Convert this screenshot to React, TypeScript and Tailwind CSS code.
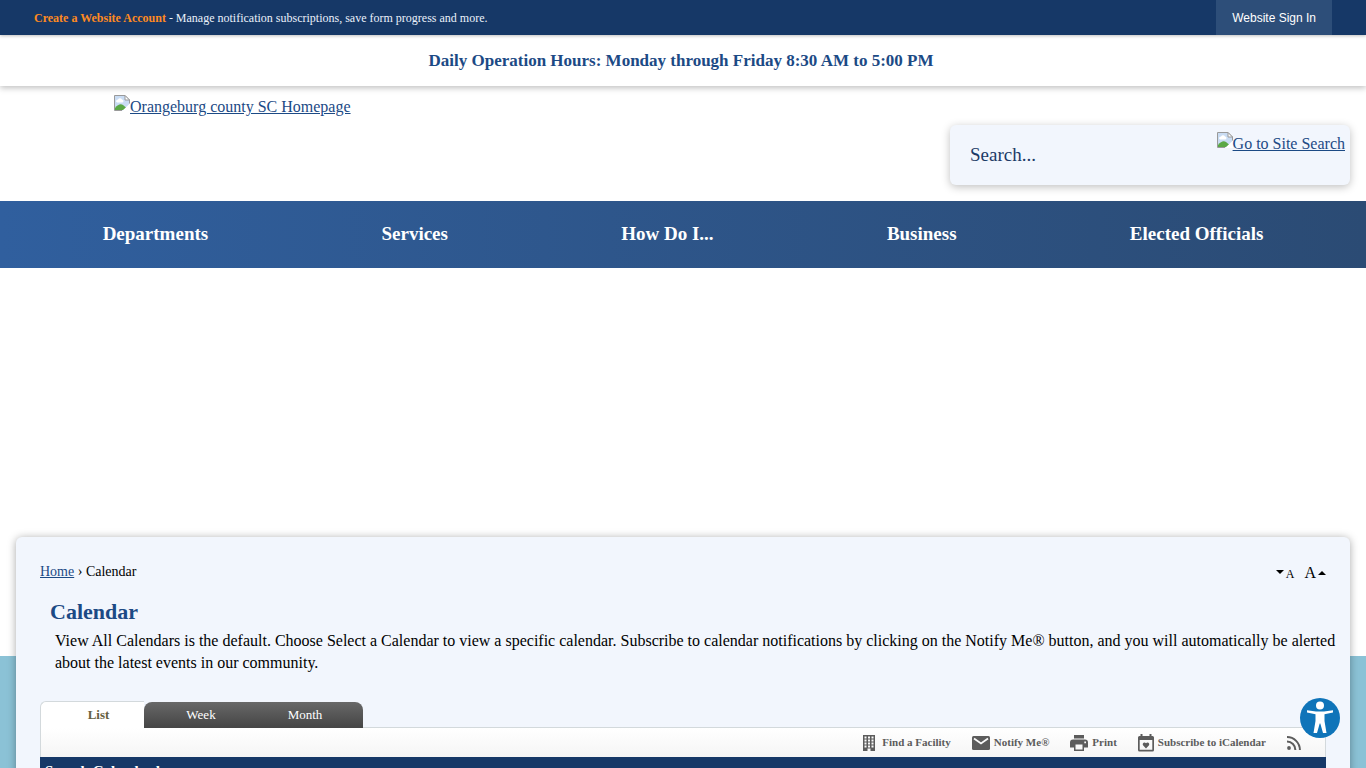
import React from "react";

const navItems = ["Departments", "Services", "How Do I...", "Business", "Elected Officials"];

// The broken image placeholder that sits in front of its alt text
function BrokenImage() {
  return (
    <svg aria-hidden className="block h-4 w-4 shrink-0" viewBox="0 0 16 16">
      <path d="M0.5 0.5H11L15.5 5V9L8.5 15.5H0.5Z" fill="#c9dcf3" />
      <path d="M2 6.5a2 2 0 0 1 2-2 2.300 2.300 0 0 1 4 0 1.500 1.500 0 0 1 0 3H3Z" fill="#fff" />
      <path d="M1 15V13C4 9 7 8.500 9 10L12 12.500 9 15Z" fill="#5aa845" />
      <path d="M16 8.500V16H8.500Z" fill="#fff" />
      <path d="M8 15.500H0.500V0.500H11L15.500 5V8.500" fill="none" stroke="#9a9a9a" />
      <path d="M11 0.500V5H15.500Z" fill="#fff" stroke="#9a9a9a" />
    </svg>
  );
}

function FacilityIcon() {
  return (
    <svg aria-hidden className="h-4 w-3" viewBox="0 0 12 16">
      <path
        fill="#5c5c5c"
        fillRule="evenodd"
        d="M0 0H12V16H7.500V13.500H4.500V16H0ZM1.500 1.500V3.500H3.500V1.500ZM5 1.500V3.500H7V1.500ZM8.500 1.500V3.500H10.500V1.500ZM1.500 4.500V6.500H3.500V4.500ZM5 4.500V6.500H7V4.500ZM8.500 4.500V6.500H10.500V4.500ZM1.500 7.500V9.500H3.500V7.500ZM5 7.500V9.500H7V7.500ZM8.500 7.500V9.500H10.500V7.500ZM1.500 10.500V12.500H3.500V10.500ZM5 10.500V12.500H7V10.500ZM8.500 10.500V12.500H10.500V10.500Z"
      />
    </svg>
  );
}

function MailIcon() {
  return (
    <svg aria-hidden className="h-[14px] w-[18px]" viewBox="0 0 18 14">
      <rect width="18" height="14" rx="1.500" fill="#5c5c5c" />
      <path d="M2 2.500 9 7.500 16 2.500" fill="none" stroke="#fafafa" strokeWidth="1.800" />
    </svg>
  );
}

function PrintIcon() {
  return (
    <svg aria-hidden className="h-4 w-[18px]" viewBox="0 0 18 16">
      <path fill="#5c5c5c" d="M4 0H14V3.500H4Z" />
      <path
        fill="#5c5c5c"
        fillRule="evenodd"
        d="M3 4.500H15A3 3 0 0 1 18 7.500V12.500H14V16H4V12.500H0V7.500A3 3 0 0 1 3 4.500ZM5.500 9.500V14.500H12.500V9.500ZM14.300 6.500V8.200H16V6.500Z"
      />
    </svg>
  );
}

function SubscribeIcon() {
  return (
    <svg aria-hidden className="h-[18px] w-4" viewBox="0 0 16 18">
      <path
        fill="#5c5c5c"
        fillRule="evenodd"
        d="M2.500 0H4.500V2H11.500V0H13.500V2H14.500A1.500 1.500 0 0 1 16 3.500V16A1.500 1.500 0 0 1 14.500 17.500H1.500A1.500 1.500 0 0 1 0 16V3.500A1.500 1.500 0 0 1 1.500 2H2.500ZM1.700 6V15.800H14.300V6Z"
      />
      <path fill="#5c5c5c" d="M8 14.500 5.200 11.600C3.700 10 6 7.300 8 9.200 10 7.300 12.300 10 10.800 11.600Z" />
    </svg>
  );
}

function RssIcon() {
  return (
    <svg aria-hidden className="h-[14px] w-[14px]" viewBox="0 0 14 14">
      <circle cx="2" cy="12" r="1.900" fill="#5c5c5c" />
      <path d="M0 5.600A8.400 8.400 0 0 1 8.400 14M0 1.100A12.900 12.900 0 0 1 12.900 14" fill="none" stroke="#5c5c5c" strokeWidth="2" />
    </svg>
  );
}

function TopBar() {
  return (
    <div className="relative z-20 flex h-[35px] items-center justify-between bg-[#163867] px-[34px] text-xs text-[#eaf1fb] shadow-[0_1px_3px_rgba(0,0,0,0.25)]">
      <p>
        <a href="#account" className="font-bold text-[#ff8a1f]">
          Create a Website Account
        </a>{" "}
        - Manage notification subscriptions, save form progress and more.
      </p>
      <a
        href="#signin"
        className="flex h-full items-center bg-[#2d4e79] px-4 font-['Liberation_Sans',sans-serif] text-white"
      >
        Website Sign In
      </a>
    </div>
  );
}

function Header() {
  return (
    <header className="flex h-[115px] items-start justify-between pr-4 pl-[114px]">
      <a href="#home" className="mt-[9px] flex text-[#1c4a85] underline">
        <BrokenImage />
        <span className="text-base leading-6">Orangeburg county SC Homepage</span>
      </a>
      <form className="mt-[39px] flex h-[60px] w-[400px] items-start justify-between rounded-md bg-[#f2f6fd] pr-[5px] pl-5 shadow-[0_2px_8px_rgba(0,0,0,0.25)]">
        <input
          type="text"
          aria-label="Search"
          placeholder="Search..."
          className="h-full w-[220px] bg-transparent text-[19px] text-[#1c3a66] outline-none placeholder:text-[#1c3a66]"
        />
        <a href="#search" className="mt-[7px] flex text-[#1c4a85] underline">
          <BrokenImage />
          <span className="text-base leading-6">Go to Site Search</span>
        </a>
      </form>
    </header>
  );
}

function Tabs() {
  return (
    <div className="relative z-10 -mb-px flex text-[13px] leading-[26px]">
      <a
        href="#list"
        className="w-[104px] rounded-tl-md border-t border-l border-[#d3d9dc] bg-white pl-3 text-center font-bold text-[#66613f]"
      >
        List
      </a>
      <div className="mt-px flex w-[219px] rounded-t-lg bg-linear-to-b from-[#686868] to-[#454545] text-white">
        <a href="#week" className="w-[104px] pl-[10px] text-center">
          Week
        </a>
        <a href="#month" className="w-[104px] pl-[10px] text-center">
          Month
        </a>
      </div>
    </div>
  );
}

function Toolbar() {
  return (
    <div className="flex h-[30px] items-center justify-end gap-[21px] border border-b-0 border-[#d3d9dc] bg-linear-to-b from-white to-[#f5f5f5] pr-6 text-[11px] font-bold text-[#5c5c5c]">
      <a href="#facility" className="flex items-center gap-[7px]">
        <FacilityIcon />
        Find a Facility
      </a>
      <a href="#notify" className="flex items-center gap-1">
        <MailIcon />
        Notify Me®
      </a>
      <a href="#print" className="flex items-center gap-1">
        <PrintIcon />
        Print
      </a>
      <a href="#subscribe" className="flex items-center gap-1">
        <SubscribeIcon />
        Subscribe to iCalendar
      </a>
      <a href="#rss" aria-label="RSS">
        <RssIcon />
      </a>
    </div>
  );
}

function TextSizeButtons() {
  return (
    <div className="flex items-center gap-[10px]">
      <button aria-label="Decrease text size" className="flex items-center gap-[2px] pt-1 text-xs">
        <svg aria-hidden className="mb-1 h-1 w-2" viewBox="0 0 8 4">
          <path d="M0 0H8L4 4Z" />
        </svg>
        A
      </button>
      <button aria-label="Increase text size" className="flex items-center gap-[2px] pt-[2px] text-base">
        A
        <svg aria-hidden className="h-1 w-2" viewBox="0 0 8 4">
          <path d="M0 4H8L4 0Z" />
        </svg>
      </button>
    </div>
  );
}

export default function App() {
  return (
    <div className="relative h-screen overflow-hidden bg-white font-['Liberation_Serif',serif]">
      <TopBar />
      <div className="relative z-10 flex h-[51px] items-center justify-center bg-white pr-1 text-[17px] font-bold text-[#1c4a85] shadow-[0_2px_6px_rgba(0,0,0,0.25)]">
        <h2>Daily Operation Hours: Monday through Friday 8:30 AM to 5:00 PM</h2>
      </div>
      <Header />
      <nav className="flex h-[67px] items-center justify-around bg-linear-to-r from-[#305f9e] to-[#2b4b74] px-4 text-[19px] font-bold text-white">
        {navItems.map((item) => (
          <a key={item} href="#nav">
            {item}
          </a>
        ))}
      </nav>
      <div className="h-[388px]" />
      {/* The content panel overlaps the empty banner above the blue band */}
      <div className="flow-root bg-[#8bc2d6] px-4">
        <main className="-mt-[119px] min-h-[600px] rounded-md bg-[#f2f6fd] px-6 pt-6 shadow-[0_1px_8px_rgba(0,0,0,0.35)]">
          <div className="flex h-[22px] items-center justify-between text-sm">
            <p>
              <a href="#home" className="text-[#1c4a85] underline">
                Home
              </a>{" "}
              › Calendar
            </p>
            <TextSizeButtons />
          </div>
          <h1 className="mt-[17px] pl-[10px] text-[22px] leading-6 font-bold text-[#1c4a85]">Calendar</h1>
          <p className="-mr-4 mt-[6px] pl-[15px] text-base leading-[22px] text-black">
            View All Calendars is the default. Choose Select a Calendar to view a specific calendar. Subscribe to
            calendar notifications by clicking on the Notify Me® button, and you will automatically be alerted about
            the latest events in our community.
          </p>
          <div className="mt-[27px]">
            <Tabs />
            <Toolbar />
            <div className="h-20 bg-[#163867] px-[5px] pt-[6px] text-[15px] leading-4 font-bold text-white">
              Search Calendar by:
            </div>
          </div>
        </main>
      </div>
      <button
        aria-label="Accessibility options"
        className="fixed right-[26px] bottom-[30px] z-30 h-10 w-10 rounded-full bg-[#0f74b9]"
      >
        <svg aria-hidden viewBox="0 0 40 40" fill="#fff">
          <circle cx="20" cy="7.500" r="4" />
          <path d="M7 12.300 16 13.500H24L33 12.300V14.500L24.500 16.300V23L26.500 35H23L20.300 25.500H19.700L17 35H13.500L15.500 23V16.300L7 14.500Z" />
        </svg>
      </button>
    </div>
  );
}
